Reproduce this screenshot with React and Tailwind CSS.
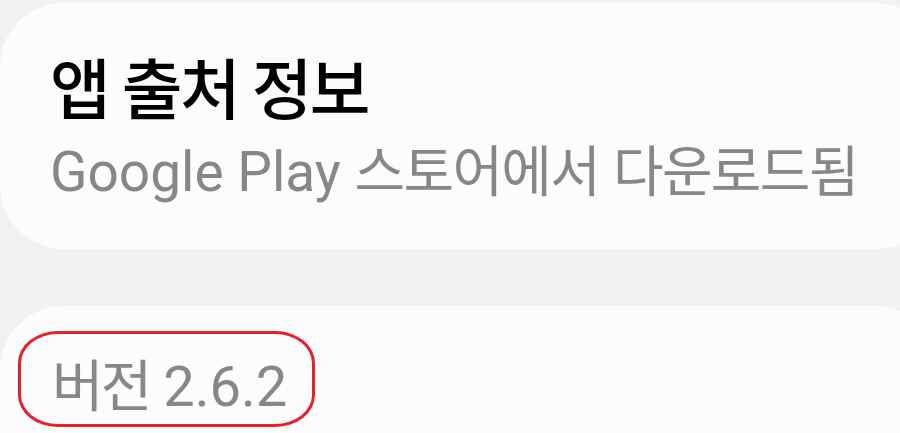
import React from "react";

const latin = { fontFamily: 'Roboto, "Noto Sans CJK KR", sans-serif' };

const App = () => {
  return (
    <div className="w-[900px] h-[433px] overflow-hidden bg-[#f2f2f4] pt-[3px]" style={latin}>
      {/* App source card */}
      <div className="h-[246px] w-[940px] rounded-[64px] bg-[#fcfcfe] pl-[50px] pt-[50px]">
        <h1 className="text-[66px] leading-[78px] font-medium text-black tracking-[-0.04em]">
          앱 출처 정보
        </h1>
        <p className="mt-[3px] text-[55px] leading-[76px] text-[#878787]">
          Google Play <span className="tracking-[-0.03em]">스토어에서</span>{" "}
          <span className="tracking-[-0.03em]">다운로드됨</span>
        </p>
      </div>

      {/* Version card */}
      <div className="mt-[57px] h-[200px] w-[940px] rounded-[64px] bg-[#fcfcfe] pl-[18px] pt-[25px]">
        <div className="inline-flex h-[96px] w-[297px] items-end rounded-[40px/32px] border-[3px] border-[#e8202a] pl-[31px] pb-[9px]">
          <span className="text-[56px] leading-none text-[#878787]">
            <span className="tracking-[-0.05em]">버전</span> 2.6.2
          </span>
        </div>
      </div>
    </div>
  );
};

export default App;
